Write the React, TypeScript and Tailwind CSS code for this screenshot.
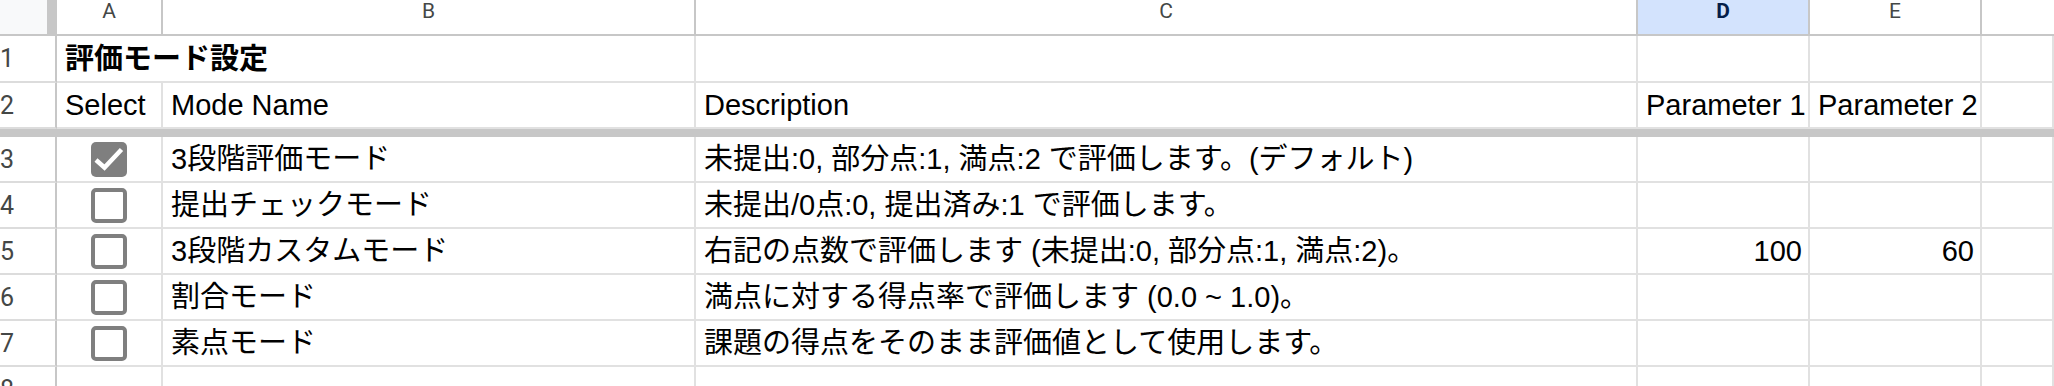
const cols = [
  { key: "A", w: "w-[106px]" },
  { key: "B", w: "w-[533px]" },
  { key: "C", w: "w-[942px]" },
  { key: "D", w: "w-[172px]" },
  { key: "E", w: "w-[172px]" },
];

const modes = [
  {
    checked: true,
    name: "3段階評価モード",
    desc: "未提出:0, 部分点:1, 満点:2 で評価します。(デフォルト)",
  },
  {
    checked: false,
    name: "提出チェックモード",
    desc: "未提出/0点:0, 提出済み:1 で評価します。",
  },
  {
    checked: false,
    name: "3段階カスタムモード",
    desc: "右記の点数で評価します (未提出:0, 部分点:1, 満点:2)。",
    p1: "100",
    p2: "60",
  },
  {
    checked: false,
    name: "割合モード",
    desc: "満点に対する得点率で評価します (0.0 ~ 1.0)。",
  },
  {
    checked: false,
    name: "素点モード",
    desc: "課題の得点をそのまま評価値として使用します。",
  },
];

function RowHead({ n, h }: { n: number; h: string }) {
  return (
    <div
      className={`${h} flex w-[57px] shrink-0 items-center border-r-2 border-b-2 border-r-[#c7c7c7] border-b-[#dcdcdc] bg-white font-['Roboto',sans-serif] text-[25px] leading-none text-[#444746]`}
    >
      {n}
    </div>
  );
}

function Cell({
  w,
  children,
  right,
  className = "",
}: {
  w: string;
  children?: React.ReactNode;
  right?: boolean;
  className?: string;
}) {
  return (
    <div
      className={`${w} flex shrink-0 items-end overflow-visible whitespace-nowrap border-r-2 border-b-2 border-[#e1e1e1] pb-[5px] ${
        right ? "justify-end pr-[6px]" : "pl-[8px]"
      } ${className}`}
    >
      {children != null && <span className="leading-[33px]">{children}</span>}
    </div>
  );
}

function Checkbox({ checked }: { checked: boolean }) {
  if (checked) {
    return (
      <div className="flex h-[35px] w-[36px] items-center justify-center rounded-[5px] bg-[#7f7f7f]">
        <svg viewBox="0 0 36 35" className="h-[35px] w-[36px]">
          <path d="M5 18 L13.5 25.5 L30.5 7.5" fill="none" stroke="#ffffff" strokeWidth="4.5" />
        </svg>
      </div>
    );
  }
  return <div className="h-[35px] w-[36px] rounded-[5px] border-4 border-[#7f7f7f] bg-white" />;
}

export default function App() {
  return (
    <div className="h-[386px] w-[2054px] overflow-hidden bg-white font-['Liberation_Sans','Noto_Sans_CJK_JP',sans-serif] text-[29px] text-black">
      {/* column letters */}
      <div className="flex h-[36px]">
        <div className="flex h-[36px] w-[57px] shrink-0 border-b-2 border-[#c7c7c7]">
          <div className="w-[47px] bg-[#f8f9fa]" />
          <div className="w-[10px] bg-[#c7c7c7]" />
        </div>
        {cols.map((c) => (
          <div
            key={c.key}
            className={`${c.w} flex shrink-0 justify-center border-r-2 border-b-2 border-[#c7c7c7] pt-[1px] font-['Roboto',sans-serif] text-[21px] leading-[21px] ${
              c.key === "D" ? "bg-[#d3e3fd] font-bold text-[#041e49]" : "bg-white text-[#444746]"
            }`}
          >
            {c.key}
          </div>
        ))}
        <div className="flex-1 border-b-2 border-[#c7c7c7]" />
      </div>

      {/* title row */}
      <div className="flex h-[47px]">
        <RowHead n={1} h="h-[47px]" />
        <Cell w="w-[639px]" className="font-bold">
          評価モード設定
        </Cell>
        <Cell w="w-[942px]" />
        <Cell w="w-[172px]" />
        <Cell w="w-[172px]" />
        <Cell w="flex-1" />
      </div>

      {/* header row */}
      <div className="flex h-[46px]">
        <RowHead n={2} h="h-[46px]" />
        <Cell w="w-[106px]">Select</Cell>
        <Cell w="w-[533px]">Mode Name</Cell>
        <Cell w="w-[942px]">Description</Cell>
        <Cell w="w-[172px]">Parameter 1</Cell>
        <Cell w="w-[172px]">Parameter 2</Cell>
        <Cell w="flex-1" />
      </div>

      {/* frozen rows divider */}
      <div className="h-[8px] bg-[#c7c7c7]" />

      {modes.map((m, i) => (
        <div key={m.name} className="flex h-[46px]">
          <RowHead n={i + 3} h="h-[46px]" />
          <div className="flex w-[106px] shrink-0 items-center justify-center border-r-2 border-b-2 border-[#e1e1e1]">
            <Checkbox checked={m.checked} />
          </div>
          <Cell w="w-[533px]">{m.name}</Cell>
          <Cell w="w-[942px]">{m.desc}</Cell>
          <Cell w="w-[172px]" right>
            {m.p1}
          </Cell>
          <Cell w="w-[172px]" right>
            {m.p2}
          </Cell>
          <Cell w="flex-1" />
        </div>
      ))}

      <div className="flex h-[46px]">
        <RowHead n={8} h="h-[46px]" />
        <Cell w="w-[106px]" />
        <Cell w="w-[533px]" />
        <Cell w="w-[942px]" />
        <Cell w="w-[172px]" />
        <Cell w="w-[172px]" />
        <Cell w="flex-1" />
      </div>
    </div>
  );
}
